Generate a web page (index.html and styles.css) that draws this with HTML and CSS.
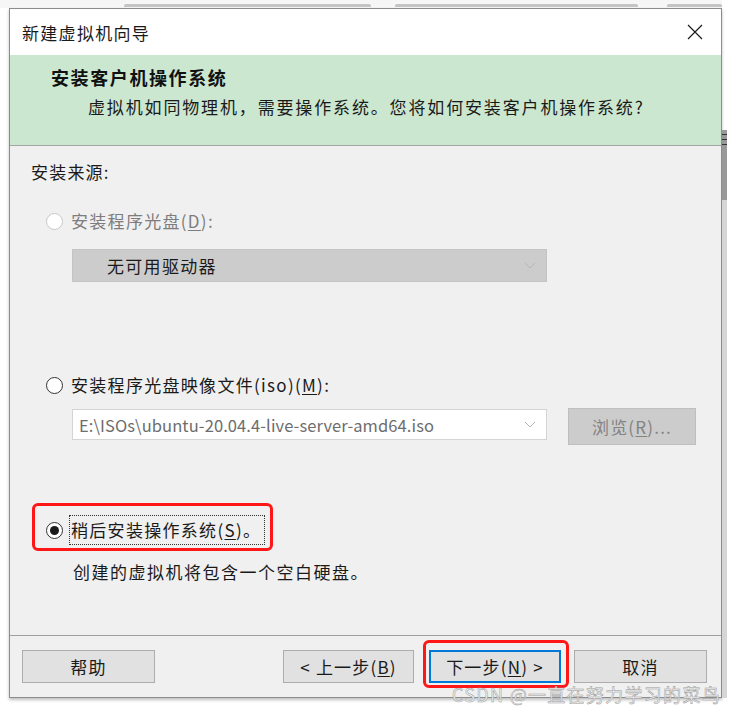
FILE: index.html
```html
<!DOCTYPE html>
<html lang="zh-CN">
<head>
<meta charset="utf-8">
<title>新建虚拟机向导</title>
<link rel="stylesheet" href="styles.css">
</head>
<body>
<div class="topstrip">
  <span class="tab t1"></span><span class="tab t2"></span><span class="tab t3"></span>
</div>
<div class="stage">
  <div class="dialog">
    <div class="titlebar">
      <span class="title">新建虚拟机向导</span>
      <svg class="close" width="16" height="16" viewBox="0 0 16 16"><path d="M1 1 L15 15 M15 1 L1 15" stroke="#1a1a1a" stroke-width="1.2" fill="none"/></svg>
    </div>
    <div class="header">
      <div class="h-title">安装客户机操作系统</div>
      <div class="h-sub">虚拟机如同物理机，需要操作系统。您将如何安装客户机操作系统?</div>
    </div>
    <div class="content">
      <div class="label">安装来源:</div>
      <div class="radio-row disabled r1">
        <span class="radio off"></span>
        <span>安装程序光盘(<u>D</u>):</span>
      </div>
      <div class="select disabled-select">
        <span class="sel-text">无可用驱动器</span>
        <svg class="chev" width="12" height="8" viewBox="0 0 12 8"><path d="M1 1 L6 6 L11 1" stroke="#b5b5b5" stroke-width="1" fill="none"/></svg>
      </div>
      <div class="radio-row r2">
        <span class="radio"></span>
        <span>安装程序光盘映像文件(iso)(<u>M</u>):</span>
      </div>
      <div class="iso-row">
        <div class="combo">
          <span class="combo-text">E:\ISOs\ubuntu-20.04.4-live-server-amd64.iso</span>
          <svg class="chev" width="12" height="8" viewBox="0 0 12 8"><path d="M1 1 L6 6 L11 1" stroke="#b5b5b5" stroke-width="1" fill="none"/></svg>
        </div>
        <div class="btn browse">浏览(<u>R</u>)...</div>
      </div>
      <div class="radio-row r3">
        <span class="radio on"></span>
        <span class="focus">稍后安装操作系统(<u>S</u>)。</span>
        <span class="mark mark1"></span>
      </div>
      <div class="desc">创建的虚拟机将包含一个空白硬盘。</div>
    </div>
    <div class="footer">
      <div class="btn help">帮助</div>
      <div class="spacer"></div>
      <div class="btn back">&lt; 上一步(<u>B</u>)</div>
      <div class="btn next">下一步(<u>N</u>) &gt;<span class="mark mark2"></span></div>
      <div class="btn cancel">取消</div>
    </div>
  </div>
  <div class="side">
    <div class="grips"><i></i><i></i><i></i></div>
    <div class="thumb"></div>
    <div class="track"></div>
  </div>
  <div class="watermark">CSDN @一直在努力学习的菜鸟</div>
</div>
</body>
</html>
```
FILE: styles.css
```css
* { box-sizing: border-box; }
html, body { margin: 0; padding: 0; background: #ffffff; }
body {
  width: 739px;
  height: 712px;
  overflow: hidden;
  font-family: "Noto Sans CJK SC", "Noto Sans", sans-serif;
  font-size: 17px;
  color: #1a1a1a;
}
u { text-decoration: underline; text-underline-offset: 2px; text-decoration-thickness: 1px; }

.topstrip {
  height: 8px;
  width: 722px;
  background: #f6f6f6;
  display: flex;
  align-items: flex-start;
  padding-top: 4px;
}
.tab { height: 3px; background: #c4c4c4; border-radius: 2px 2px 0 0; }
.t1 { margin-left: 124px; width: 247px; }
.t2 { margin-left: 24px; width: 243px; }
.t3 { margin-left: 29px; width: 55px; }

.stage {
  position: relative;
  display: flex;
  align-items: flex-start;
  height: 704px;
}

.dialog {
  margin-left: 9px;
  width: 713px;
  height: 690px;
  border: 1px solid #8c8c8c;
  background: #f0f0f0;
  display: flex;
  flex-direction: column;
  box-shadow: 0 2px 3px rgba(0,0,0,0.25);
}

.titlebar {
  height: 46px;
  background: #ffffff;
  display: flex;
  align-items: center;
  justify-content: space-between;
  padding: 0 18px 0 12px;
}
.title { font-size: 17px; color: #1a1a1a; letter-spacing: 1.3px; }
.close { display: block; }

.header {
  height: 91px;
  background: #cce7d0;
  border-bottom: 1px solid #a5a5a5;
  padding: 10px 0 0 41px;
}
.h-title { font-weight: bold; font-size: 18px; line-height: 25px; letter-spacing: 1.6px; color: #111; }
.h-sub { margin-top: 4px; padding-left: 37px; line-height: 25px; font-size: 17px; letter-spacing: 1.85px; color: #1a1a1a; }

.content {
  flex: 1;
  padding: 14px 0 0 21px;
  display: flex;
  flex-direction: column;
  align-items: flex-start;
}
.label { line-height: 24px; letter-spacing: 1.2px; }

.radio-row {
  position: relative;
  display: flex;
  align-items: center;
  gap: 8px;
  margin-left: 15px;
  line-height: 24px;
  letter-spacing: 1.3px;
}
.radio-row.disabled { color: #7d7d7d; }
.r1 { margin-top: 25px; }
.r2 { margin-top: 91px; }
.r3 { margin-top: 70px; }
.radio {
  width: 17px; height: 17px;
  border-radius: 50%;
  border: 1px solid #333;
  background: #ffffff;
  flex: none;
  display: flex;
  align-items: center;
  justify-content: center;
}
.radio.off { border-color: #c8c8c8; }
.radio.on::after {
  content: "";
  width: 9px; height: 9px; border-radius: 50%;
  background: #1a1a1a;
}

.select {
  margin: 16px 0 0 41px;
  width: 475px;
  height: 33px;
  display: flex;
  align-items: center;
  justify-content: space-between;
  padding: 0 10px 0 34px;
}
.disabled-select { background: #cccccc; border: 1px solid #c4c4c4; }
.sel-text { letter-spacing: 1.3px; color: #1a1a1a; }
.chev { display: block; }

.iso-row {
  margin: 12px 0 0 41px;
  display: flex;
  align-items: flex-start;
  gap: 21px;
}
.combo {
  width: 475px;
  height: 31px;
  background: #ffffff;
  border: 1px solid #d4d4d4;
  display: flex;
  align-items: center;
  justify-content: space-between;
  padding: 0 10px 0 6px;
}
.combo-text { color: #6d6d6d; font-size: 16.5px; letter-spacing: 0.1px; }

.btn {
  position: relative;
  height: 33px;
  display: flex;
  align-items: center;
  justify-content: center;
  background: #e1e1e1;
  border: 1px solid #adadad;
  letter-spacing: 1.2px;
}
.browse {
  width: 128px;
  height: 37px;
  margin-top: -1px;
  background: #cccccc;
  border-color: #bfbfbf;
  color: #838383;
}

.focus {
  border: 1px dotted #333;
  padding: 2px 3px 2px 1px;
  margin-left: -2px;
}
.desc { margin: 15px 0 0 42px; line-height: 24px; letter-spacing: 1.5px; }

.mark {
  position: absolute;
  border: 3px solid #ff1616;
  border-radius: 6px;
  pointer-events: none;
}
.mark1 { left: -14px; top: -12px; width: 241px; height: 48px; }
.mark2 { left: -8px; top: -12px; width: 146px; height: 48px; }

.footer {
  height: 62px;
  border-top: 1px solid #a0a0a0;
  display: flex;
  align-items: flex-start;
  padding: 14px 14px 0 12px;
}
.help { width: 133px; }
.spacer { flex: 1; }
.back { width: 131px; }
.next { width: 132px; margin-left: 15px; border: 2px solid #0078d7; }
.cancel { width: 133px; margin-left: 13px; }

.side {
  width: 5px;
  height: 690px;
  display: flex;
  flex-direction: column;
}
.grips { height: 122px; position: relative; }
.grips i { display: block; position: absolute; left: 0; width: 5px; height: 1px; background: #333; }
.grips i:nth-child(1) { top: 126px; }
.grips i:nth-child(2) { top: 131px; }
.grips i:nth-child(3) { top: 136px; }
.thumb { height: 70px; background: #999999; }
.track { flex: 1; background: #d6d6d6; }

.watermark {
  position: absolute;
  left: 452px;
  top: 673px;
  font-size: 18px;
  letter-spacing: 1.3px;
  color: #f2f2f2;
  -webkit-text-stroke: 0.5px #9a9a9a;
  white-space: nowrap;
}
```
